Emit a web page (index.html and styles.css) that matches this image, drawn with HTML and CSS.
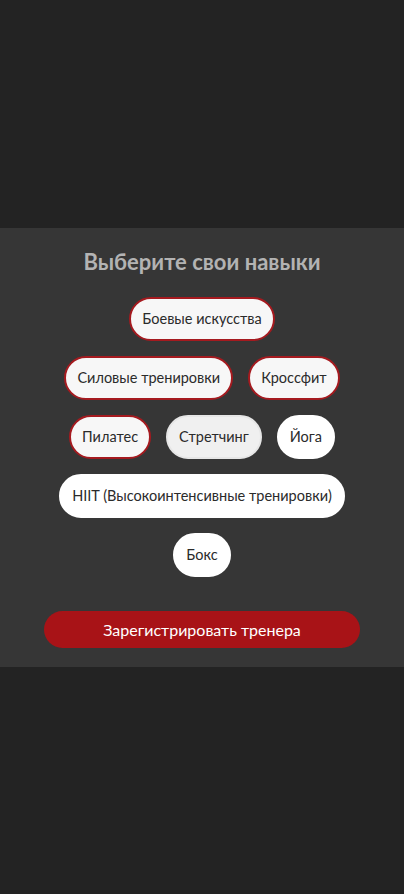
FILE: index.html
```html
<!DOCTYPE html>
<html lang="ru">
<head>
<meta charset="utf-8">
<link rel="stylesheet" href="styles.css">
</head>
<body>
<div class="page">
  <section class="panel">
    <h2 class="title">Выберите свои навыки</h2>
    <div class="chips">
      <button class="chip selected">Боевые искусства</button>
      <button class="chip selected">Силовые тренировки</button>
      <button class="chip selected">Кроссфит</button>
      <button class="chip selected">Пилатес</button>
      <button class="chip hover">Стретчинг</button>
      <button class="chip">Йога</button>
      <button class="chip">HIIT (Высокоинтенсивные тренировки)</button>
      <button class="chip">Бокс</button>
    </div>
    <button class="submit">Зарегистрировать тренера</button>
  </section>
</div>
</body>
</html>
```

FILE: styles.css
```css
html, body {
  margin: 0;
  padding: 0;
  background: #232323;
}
body {
  font-family: Lato, "Open Sans", sans-serif;
}
.page {
  min-height: 100vh;
  display: flex;
  align-items: center;
}
.panel {
  width: 100%;
  background: #363636;
  padding: 20px 44px 19px;
  box-sizing: border-box;
  display: flex;
  flex-direction: column;
  align-items: center;
}
.title {
  margin: 0 0 21px;
  font-size: 22px;
  font-weight: 700;
  color: #b3b3b3;
  line-height: 28px;
}
.chips {
  width: 100%;
  display: flex;
  flex-wrap: wrap;
  justify-content: center;
  gap: 15px 15px;
}
.chip {
  font-family: inherit;
  font-size: 14.5px;
  color: #2b2b2b;
  background: #ffffff;
  border: 2px solid #ffffff;
  border-radius: 22px;
  height: 44px;
  padding: 0 11px;
  cursor: pointer;
}
.chip.selected {
  background: #f7f7f7;
  border-color: #a51a1f;
}
.chip.hover {
  background: #f0f0f0;
  border-color: #e6e6e6;
}
.submit {
  margin-top: 34px;
  width: 100%;
  height: 37px;
  border: none;
  border-radius: 19px;
  background: #a81317;
  color: #ffffff;
  font-family: inherit;
  font-size: 16px;
  cursor: pointer;
}
```
